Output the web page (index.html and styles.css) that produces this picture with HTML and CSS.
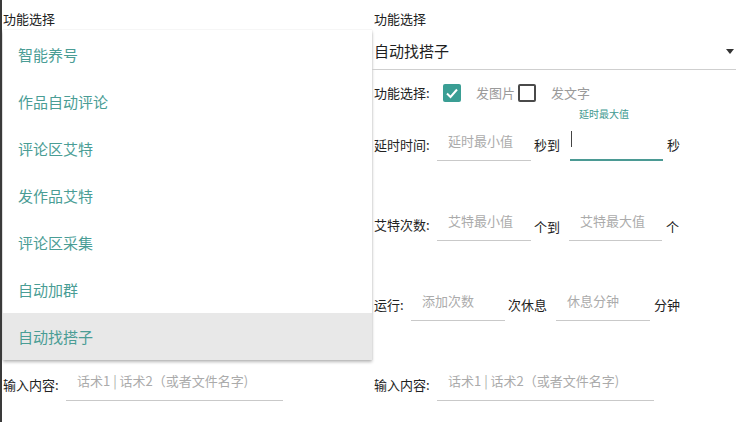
FILE: index.html
```html
<!DOCTYPE html>
<html lang="zh">
<head>
<meta charset="utf-8">
<title>功能选择</title>
<link rel="stylesheet" href="styles.css">
</head>
<body>
<div class="screen">
  <section class="panel panel-left">
    <div class="caption">功能选择</div>
    <div class="covered">
      <div class="spinner"><span class="spinner-value">自动找搭子</span><span class="arrow"></span></div>
      <div class="check-row">
        <span class="label w-check">功能选择:</span>
        <span class="cb cb-on"></span>
        <span class="cb-text">发图片</span>
        <span class="cb cb-off"></span>
        <span class="cb-text">发文字</span>
      </div>
      <div class="row row-first"></div>
      <div class="row"></div>
      <div class="row"></div>
    </div>
    <div class="row">
      <span class="label w63">输入内容:</span>
      <div class="field w217"><div class="box"><span class="ph">话术1 | 话术2（或者文件名字)</span></div></div>
    </div>

    <ul class="menu">
      <li class="menu-item">智能养号</li>
      <li class="menu-item">作品自动评论</li>
      <li class="menu-item">评论区艾特</li>
      <li class="menu-item">发作品艾特</li>
      <li class="menu-item">评论区采集</li>
      <li class="menu-item">自动加群</li>
      <li class="menu-item menu-item-active">自动找搭子</li>
    </ul>
  </section>

  <section class="panel panel-right">
    <div class="caption">功能选择</div>
    <div class="spinner"><span class="spinner-value">自动找搭子</span><span class="arrow"></span></div>
    <div class="check-row">
      <span class="label w-check">功能选择:</span>
      <span class="cb cb-on"><svg width="18" height="18" viewBox="0 0 18 18"><polyline points="4,9.5 7.5,13 14,5.5" fill="none" stroke="#fff" stroke-width="2"/></svg></span>
      <span class="cb-text">发图片</span>
      <span class="cb cb-off"></span>
      <span class="cb-text">发文字</span>
    </div>
    <div class="row row-first">
      <span class="label w63">延时时间:</span>
      <div class="field w94"><div class="box"><span class="ph">延时最小值</span></div></div>
      <span class="unit u-to">秒到</span>
      <div class="field w93 ml10 focused">
        <div class="float-label">延时最大值</div>
        <div class="box"><span class="cursor"></span></div>
      </div>
      <span class="unit u-end">秒</span>
    </div>
    <div class="row">
      <span class="label w63">艾特次数:</span>
      <div class="field w94"><div class="box"><span class="ph">艾特最小值</span></div></div>
      <span class="unit u-to low">个到</span>
      <div class="field w93 ml9"><div class="box"><span class="ph">艾特最大值</span></div></div>
      <span class="unit u-end low">个</span>
    </div>
    <div class="row">
      <span class="label w37">运行:</span>
      <div class="field w94"><div class="box"><span class="ph">添加次数</span></div></div>
      <span class="unit u-to">次休息</span>
      <div class="field w94 ml9"><div class="box"><span class="ph">休息分钟</span></div></div>
      <span class="unit u-end">分钟</span>
    </div>
    <div class="row">
      <span class="label w63">输入内容:</span>
      <div class="field w217"><div class="box"><span class="ph">话术1 | 话术2（或者文件名字)</span></div></div>
    </div>
  </section>
</div>
</body>
</html>
```

FILE: styles.css
```css
* { box-sizing: border-box; }
html, body {
  margin: 0;
  padding: 0;
  background: #fff;
}
body {
  font-family: "Noto Sans CJK SC", "Noto Sans", sans-serif;
  color: #222;
  font-size: 13px;
}
.screen {
  display: flex;
  width: 736px;
  height: 422px;
  border-left: 2px solid #3a3a3a;
  overflow: hidden;
}
.panel {
  position: relative;
  height: 422px;
}
.panel-left {
  width: 370px;
  flex: none;
  padding-left: 1px;
}
.panel-right {
  flex: 1;
  padding-left: 2px;
}
.covered {
  visibility: hidden;
}
.caption {
  margin-top: 10px;
  line-height: 18px;
  font-size: 13px;
}
.spinner {
  height: 42px;
  display: flex;
  align-items: flex-start;
  justify-content: space-between;
  border-bottom: 1px solid #cfcfcf;
  margin-left: -2px;
  padding-left: 2px;
}
.spinner-value {
  margin-top: 12px;
  font-size: 15px;
  line-height: 22px;
  color: #1e1e1e;
}
.arrow {
  width: 0;
  height: 0;
  margin-top: 21px;
  margin-right: 2px;
  border-left: 4px solid transparent;
  border-right: 4px solid transparent;
  border-top: 5px solid #333;
}
.check-row {
  margin-top: 11px;
  height: 24px;
  display: flex;
  align-items: center;
}
.label {
  flex: none;
  line-height: 18px;
  font-size: 13px;
}
.w-check { width: 69px; }
.w63 { width: 63px; }
.w37 { width: 37px; }
.cb {
  flex: none;
  width: 18px;
  height: 18px;
  border-radius: 2px;
}
.cb-on {
  background: #3a9e94;
}
.cb-on svg { display: block; }
.cb-off {
  border: 2px solid #4a4a4a;
  margin-left: 3px;
}
.cb-text {
  margin-left: 15px;
  color: #9a9a9a;
  line-height: 18px;
}
.row {
  height: 80px;
  display: flex;
  align-items: flex-end;
}
.row-first {
  height: 56px;
}
.row .label {
  margin-bottom: 7px;
}
.field {
  flex: none;
  display: flex;
  flex-direction: column;
}
.w94 { width: 94px; }
.w93 { width: 93px; }
.w217 { width: 217px; }
.ml10 { margin-left: 10px; }
.ml9 { margin-left: 9px; }
.box {
  height: 40px;
  display: flex;
  align-items: flex-end;
  border-bottom: 1px solid #c9c9c9;
  padding-left: 11px;
  padding-bottom: 10px;
}
.ph {
  color: #ababab;
  line-height: 18px;
  font-size: 13px;
  white-space: nowrap;
}
.focused .box {
  border-bottom: 2px solid #4b9a94;
  padding-left: 1px;
  padding-bottom: 12px;
}
.cursor {
  display: block;
  width: 1px;
  height: 16px;
  background: #444;
}
.float-label {
  font-size: 10px;
  line-height: 12px;
  color: #3f9a91;
  padding-left: 9px;
  margin-bottom: 1px;
}
.unit {
  flex: none;
  line-height: 18px;
  margin-bottom: 7px;
}
.unit.low { margin-bottom: 5px; }
.u-to { margin-left: 3px; }
.u-end { margin-left: 4px; }

.menu {
  position: absolute;
  top: 30px;
  left: 1px;
  width: 369px;
  margin: 0;
  padding: 1px 0 0;
  list-style: none;
  background: #fff;
  box-shadow: 0 2px 3px rgba(0,0,0,0.28), 0 0 1px rgba(0,0,0,0.15);
}
.menu-item {
  height: 47px;
  line-height: 47px;
  padding-left: 15px;
  font-size: 15px;
  color: #4a9d95;
}
.menu-item-active {
  background: #e8e8e8;
}
```
